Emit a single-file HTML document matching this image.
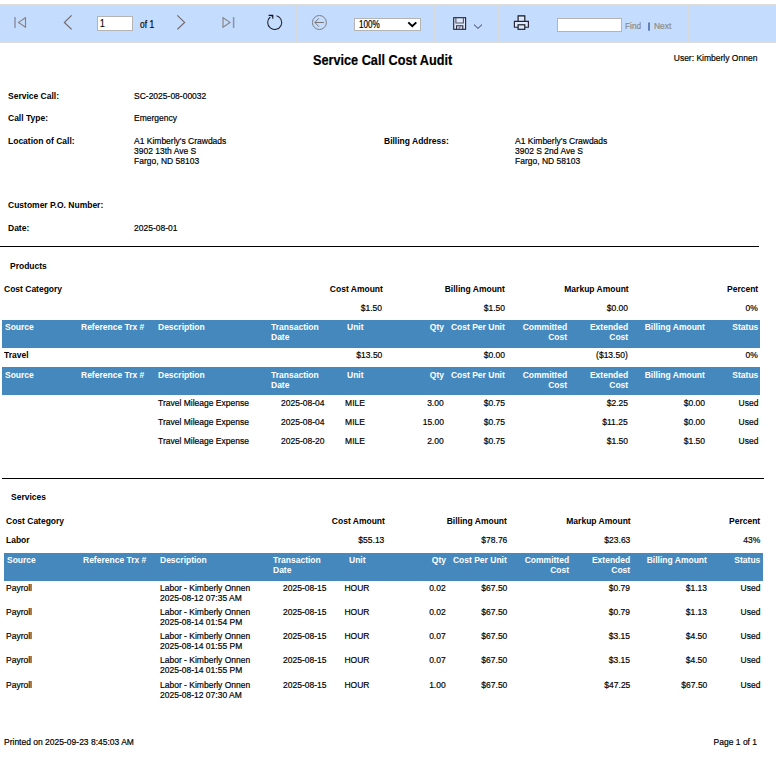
<!DOCTYPE html>
<html lang="en"><head><meta charset="utf-8"><title>Service Call Cost Audit</title>
<style>
html,body{margin:0;padding:0;background:#fff;}
body{width:776px;height:759px;overflow:hidden;font-family:"Liberation Sans",sans-serif;font-size:10.67px;color:#000;}
#page{position:relative;width:776px;height:759px;overflow:hidden;}
.t{position:absolute;white-space:nowrap;line-height:10px;font-size:9.6px;transform:scaleX(.886);transform-origin:0 0;-webkit-text-stroke:0.2px currentColor;}
.t.r{transform-origin:100% 0;text-align:right;}
.t.c{transform-origin:50% 0;text-align:center;}
.b{font-weight:bold;-webkit-text-stroke:0;}
.w{color:#fff;}
.title{font-size:14.67px;font-weight:bold;line-height:16px;transform:scaleX(.866);}
.hr{position:absolute;height:1px;background:#000;}
.band{position:absolute;background:#4588be;}
#tb{position:absolute;left:0;top:4px;width:776px;height:39px;background:#c4ddfe;border-top:1px solid #dcdcdc;border-bottom:1px solid #dcdcdc;box-sizing:border-box;}
#tb .sep{position:absolute;top:0;width:1px;height:37px;background:#d9dadd;}
#tb svg{position:absolute;overflow:visible;}
#tb .inp{position:absolute;background:#fff;border:1px solid #b4b4b4;box-sizing:border-box;}
.g{color:#8a8a8a;}
.tt{font-size:10.2px;transform:scaleX(.834);}

</style></head>
<body>
<div id="page">
<div id="tb">
<div class="sep" style="left:251px"></div>
<div class="sep" style="left:296px"></div>
<div class="sep" style="left:341px"></div>
<div class="sep" style="left:434px"></div>
<div class="sep" style="left:498px"></div>
<div class="sep" style="left:543px"></div>
<div class="sep" style="left:688px"></div>
<div class="inp" style="left:97px;top:11px;width:36px;height:15px;"></div>
<div class="inp" style="left:354px;top:13px;width:67px;height:13px;"></div>
<div class="inp" style="left:557px;top:13px;width:65px;height:14px;"></div>
<div class="t tt" style="left:99.5px;top:13.5px;">1</div>
<div class="t tt" style="left:139.6px;top:14.8px;">of 1</div>
<div class="t tt" style="left:359px;top:15px;transform:scaleX(.8)">100%</div>
<div class="t g" style="left:625.4px;top:15.8px;font-size:9.2px;transform:scaleX(.9)">Find</div>
<div class="t g" style="left:654px;top:15.8px;font-size:9.2px;transform:scaleX(.92)">Next</div>
<svg style="left:0;top:-5px" width="776" height="48" viewBox="0 0 776 48">
<g fill="none" stroke-linecap="butt" stroke-linejoin="miter">
<!-- first page -->
<path d="M15 17V28" stroke="#9090a8" stroke-width="1.5"/>
<path d="M25.5 17.7L18.5 22.4L25.5 27.3Z" stroke="#867e80" stroke-width="1.1"/>
<!-- previous -->
<path d="M71.6 15.4L64.4 22.4L71.6 29.4" stroke="#74686c" stroke-width="1.25"/>
<!-- next -->
<path d="M177.3 15.4L184.6 22.4L177.3 29.4" stroke="#74686c" stroke-width="1.25"/>
<!-- last page -->
<path d="M233.6 17V28" stroke="#9090a8" stroke-width="1.5"/>
<path d="M223 17.7L230 22.4L223 27.3Z" stroke="#867e80" stroke-width="1.1"/>
<!-- refresh -->
<path d="M276.5 15.7A7 7 0 1 1 270.3 17" stroke="#1c1c28" stroke-width="1.05"/>
<path d="M268.6 15.4H272.8V18.8" stroke="#15151f" stroke-width="1.1"/>
<path d="M272.8 15.4L270.6 15.4L272.8 17.4Z" fill="#15151f" stroke="none"/>
<!-- back -->
<circle cx="319.4" cy="22.5" r="7" stroke="#807e82" stroke-width="1"/>
<path d="M323.9 22.5H315M318.9 18.3L314.8 22.5L318.9 26.7" stroke="#787678" stroke-width="1"/>
<!-- select chevron -->
<path d="M408.3 22.4L412.3 26.2L416.3 22.4" stroke="#000" stroke-width="2"/>
<!-- save -->
<rect x="453.7" y="17.7" width="11.9" height="11.6" fill="#dce8fe" stroke="#20202c" stroke-width="1.1"/>
<path d="M455.9 17.7V23H463.4V17.7" stroke="#55555f" stroke-width="1.1"/>
<path d="M456.6 29.3V25.7H462.8V29.3" stroke="#2a2a34" stroke-width="1.1"/>
<path d="M459.2 29.3V27H461" stroke="#6a5a8a" stroke-width="1"/>
<path d="M474 24.6L478 28.4L482 24.6" stroke="#2e2e4c" stroke-width="0.95"/>
<!-- print -->
<path d="M518.1 21V15.8H524.8V21" fill="#dce8fe" stroke="#16161c" stroke-width="1.15"/>
<path d="M518 27.2H514.4V21.3H528.4V27.2H525" fill="#dce8fe" stroke="#2a2034" stroke-width="1.15"/>
<rect x="518.1" y="24.8" width="6.7" height="4.5" fill="#dce8fe" stroke="#16161c" stroke-width="1.15"/>
<!-- find separator -->
<path d="M649 22.5V30.8" stroke="#3a5a9a" stroke-width="1.4"/>
</g>
</svg>
</div>

<div class="t title" style="left:313px;top:52.4px;">Service Call Cost Audit</div>
<div class="t r" style="right:19px;top:53px;">User: Kimberly Onnen</div>
<div class="t b" style="left:7.5px;top:91px;">Service Call:</div>
<div class="t " style="left:134px;top:91px;">SC-2025-08-00032</div>
<div class="t b" style="left:7.5px;top:113px;">Call Type:</div>
<div class="t " style="left:134px;top:113px;">Emergency</div>
<div class="t b" style="left:7.5px;top:136px;">Location of Call:</div>
<div class="t " style="left:134px;top:136px;">A1 Kimberly's Crawdads<br>3902 13th Ave S<br>Fargo, ND 58103</div>
<div class="t b" style="left:384px;top:136px;">Billing Address:</div>
<div class="t " style="left:515px;top:136px;">A1 Kimberly's Crawdads<br>3902 S 2nd Ave S<br>Fargo, ND 58103</div>
<div class="t b" style="left:7.5px;top:200px;">Customer P.O. Number:</div>
<div class="t b" style="left:7.5px;top:223px;">Date:</div>
<div class="t " style="left:134px;top:223px;">2025-08-01</div>
<div class="hr" style="left:0;top:246px;width:759px"></div>
<div class="t b" style="left:10px;top:261px;">Products</div>
<div class="t b" style="left:4px;top:284px;">Cost Category</div>
<div class="t b r" style="right:393.6px;top:284px;">Cost Amount</div>
<div class="t b r" style="right:271px;top:284px;">Billing Amount</div>
<div class="t b r" style="right:147.39999999999998px;top:284px;">Markup Amount</div>
<div class="t b r" style="right:18px;top:284px;">Percent</div>
<div class="t r" style="right:393.7px;top:303px;">$1.50</div>
<div class="t r" style="right:271px;top:303px;">$1.50</div>
<div class="t r" style="right:148px;top:303px;">$0.00</div>
<div class="t r" style="right:18px;top:303px;">0%</div>
<div class="band" style="left:2px;top:320px;width:758px;height:28px"></div>
<div class="t b w" style="left:5px;top:322px;">Source</div>
<div class="t b w" style="left:80.7px;top:322px;">Reference Trx #</div>
<div class="t b w" style="left:157.7px;top:322px;">Description</div>
<div class="t b w" style="left:271px;top:322px;">Transaction<br>Date</div>
<div class="t b w" style="left:346.7px;top:322px;">Unit</div>
<div class="t b w r" style="right:332px;top:322px;">Qty</div>
<div class="t b w r" style="right:271px;top:322px;">Cost Per Unit</div>
<div class="t b w r" style="right:209px;top:322px;">Committed<br>Cost</div>
<div class="t b w r" style="right:148px;top:322px;">Extended<br>Cost</div>
<div class="t b w r" style="right:71px;top:322px;">Billing Amount</div>
<div class="t b w r" style="right:18px;top:322px;">Status</div>
<div class="t b" style="left:4px;top:350px;">Travel</div>
<div class="t r" style="right:393.7px;top:350px;">$13.50</div>
<div class="t r" style="right:271px;top:350px;">$0.00</div>
<div class="t r" style="right:148px;top:350px;">($13.50)</div>
<div class="t r" style="right:18px;top:350px;">0%</div>
<div class="band" style="left:2px;top:367px;width:758px;height:28px"></div>
<div class="t b w" style="left:5px;top:370px;">Source</div>
<div class="t b w" style="left:80.7px;top:370px;">Reference Trx #</div>
<div class="t b w" style="left:157.7px;top:370px;">Description</div>
<div class="t b w" style="left:271px;top:370px;">Transaction<br>Date</div>
<div class="t b w" style="left:346.7px;top:370px;">Unit</div>
<div class="t b w r" style="right:332px;top:370px;">Qty</div>
<div class="t b w r" style="right:271px;top:370px;">Cost Per Unit</div>
<div class="t b w r" style="right:209px;top:370px;">Committed<br>Cost</div>
<div class="t b w r" style="right:148px;top:370px;">Extended<br>Cost</div>
<div class="t b w r" style="right:71px;top:370px;">Billing Amount</div>
<div class="t b w r" style="right:18px;top:370px;">Status</div>
<div class="t " style="left:157.8px;top:398px;">Travel Mileage Expense</div>
<div class="t " style="left:280.7px;top:398px;">2025-08-04</div>
<div class="t c" style="left:305.4px;top:398px;width:100px;">MILE</div>
<div class="t r" style="right:332px;top:398px;">3.00</div>
<div class="t r" style="right:271px;top:398px;">$0.75</div>
<div class="t r" style="right:148px;top:398px;">$2.25</div>
<div class="t r" style="right:71px;top:398px;">$0.00</div>
<div class="t r" style="right:18px;top:398px;">Used</div>
<div class="t " style="left:157.8px;top:417px;">Travel Mileage Expense</div>
<div class="t " style="left:280.7px;top:417px;">2025-08-04</div>
<div class="t c" style="left:305.4px;top:417px;width:100px;">MILE</div>
<div class="t r" style="right:332px;top:417px;">15.00</div>
<div class="t r" style="right:271px;top:417px;">$0.75</div>
<div class="t r" style="right:148px;top:417px;">$11.25</div>
<div class="t r" style="right:71px;top:417px;">$0.00</div>
<div class="t r" style="right:18px;top:417px;">Used</div>
<div class="t " style="left:157.8px;top:436px;">Travel Mileage Expense</div>
<div class="t " style="left:280.7px;top:436px;">2025-08-20</div>
<div class="t c" style="left:305.4px;top:436px;width:100px;">MILE</div>
<div class="t r" style="right:332px;top:436px;">2.00</div>
<div class="t r" style="right:271px;top:436px;">$0.75</div>
<div class="t r" style="right:148px;top:436px;">$1.50</div>
<div class="t r" style="right:71px;top:436px;">$1.50</div>
<div class="t r" style="right:18px;top:436px;">Used</div>
<div class="hr" style="left:2px;top:478px;width:762px"></div>
<div class="t b" style="left:11px;top:492px;">Services</div>
<div class="t b" style="left:6px;top:516px;">Cost Category</div>
<div class="t b r" style="right:391.6px;top:516px;">Cost Amount</div>
<div class="t b r" style="right:269px;top:516px;">Billing Amount</div>
<div class="t b r" style="right:145.39999999999998px;top:516px;">Markup Amount</div>
<div class="t b r" style="right:16px;top:516px;">Percent</div>
<div class="t b" style="left:6px;top:535px;">Labor</div>
<div class="t r" style="right:391.7px;top:535px;">$55.13</div>
<div class="t r" style="right:269px;top:535px;">$78.76</div>
<div class="t r" style="right:146px;top:535px;">$23.63</div>
<div class="t r" style="right:16px;top:535px;">43%</div>
<div class="band" style="left:4px;top:553px;width:759px;height:28px"></div>
<div class="t b w" style="left:7px;top:555px;">Source</div>
<div class="t b w" style="left:82.7px;top:555px;">Reference Trx #</div>
<div class="t b w" style="left:159.7px;top:555px;">Description</div>
<div class="t b w" style="left:273px;top:555px;">Transaction<br>Date</div>
<div class="t b w" style="left:348.7px;top:555px;">Unit</div>
<div class="t b w r" style="right:330px;top:555px;">Qty</div>
<div class="t b w r" style="right:269px;top:555px;">Cost Per Unit</div>
<div class="t b w r" style="right:207px;top:555px;">Committed<br>Cost</div>
<div class="t b w r" style="right:146px;top:555px;">Extended<br>Cost</div>
<div class="t b w r" style="right:69px;top:555px;">Billing Amount</div>
<div class="t b w r" style="right:16px;top:555px;">Status</div>
<div class="t " style="left:6px;top:583px;">Payroll</div>
<div class="t " style="left:159.8px;top:583px;">Labor - Kimberly Onnen<br>2025-08-12 07:35 AM</div>
<div class="t " style="left:282.7px;top:583px;">2025-08-15</div>
<div class="t c" style="left:307.4px;top:583px;width:100px;">HOUR</div>
<div class="t r" style="right:330px;top:583px;">0.02</div>
<div class="t r" style="right:269px;top:583px;">$67.50</div>
<div class="t r" style="right:146px;top:583px;">$0.79</div>
<div class="t r" style="right:69px;top:583px;">$1.13</div>
<div class="t r" style="right:16px;top:583px;">Used</div>
<div class="t " style="left:6px;top:607px;">Payroll</div>
<div class="t " style="left:159.8px;top:607px;">Labor - Kimberly Onnen<br>2025-08-14 01:54 PM</div>
<div class="t " style="left:282.7px;top:607px;">2025-08-15</div>
<div class="t c" style="left:307.4px;top:607px;width:100px;">HOUR</div>
<div class="t r" style="right:330px;top:607px;">0.02</div>
<div class="t r" style="right:269px;top:607px;">$67.50</div>
<div class="t r" style="right:146px;top:607px;">$0.79</div>
<div class="t r" style="right:69px;top:607px;">$1.13</div>
<div class="t r" style="right:16px;top:607px;">Used</div>
<div class="t " style="left:6px;top:631px;">Payroll</div>
<div class="t " style="left:159.8px;top:631px;">Labor - Kimberly Onnen<br>2025-08-14 01:55 PM</div>
<div class="t " style="left:282.7px;top:631px;">2025-08-15</div>
<div class="t c" style="left:307.4px;top:631px;width:100px;">HOUR</div>
<div class="t r" style="right:330px;top:631px;">0.07</div>
<div class="t r" style="right:269px;top:631px;">$67.50</div>
<div class="t r" style="right:146px;top:631px;">$3.15</div>
<div class="t r" style="right:69px;top:631px;">$4.50</div>
<div class="t r" style="right:16px;top:631px;">Used</div>
<div class="t " style="left:6px;top:655px;">Payroll</div>
<div class="t " style="left:159.8px;top:655px;">Labor - Kimberly Onnen<br>2025-08-14 01:55 PM</div>
<div class="t " style="left:282.7px;top:655px;">2025-08-15</div>
<div class="t c" style="left:307.4px;top:655px;width:100px;">HOUR</div>
<div class="t r" style="right:330px;top:655px;">0.07</div>
<div class="t r" style="right:269px;top:655px;">$67.50</div>
<div class="t r" style="right:146px;top:655px;">$3.15</div>
<div class="t r" style="right:69px;top:655px;">$4.50</div>
<div class="t r" style="right:16px;top:655px;">Used</div>
<div class="t " style="left:6px;top:680px;">Payroll</div>
<div class="t " style="left:159.8px;top:680px;">Labor - Kimberly Onnen<br>2025-08-12 07:30 AM</div>
<div class="t " style="left:282.7px;top:680px;">2025-08-15</div>
<div class="t c" style="left:307.4px;top:680px;width:100px;">HOUR</div>
<div class="t r" style="right:330px;top:680px;">1.00</div>
<div class="t r" style="right:269px;top:680px;">$67.50</div>
<div class="t r" style="right:146px;top:680px;">$47.25</div>
<div class="t r" style="right:69px;top:680px;">$67.50</div>
<div class="t r" style="right:16px;top:680px;">Used</div>
<div class="t " style="left:4px;top:737px;">Printed on 2025-09-23 8:45:03 AM</div>
<div class="t r" style="right:19px;top:737px;">Page 1 of 1</div>
</div>
</body></html>
